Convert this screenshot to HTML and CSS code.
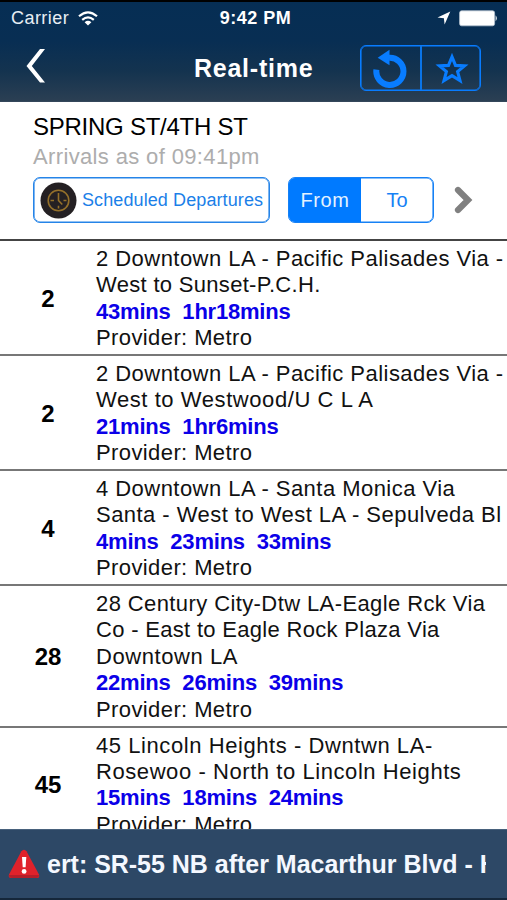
FILE: index.html
```
<!DOCTYPE html>
<html lang="en">
<head>
<meta charset="utf-8">
<title>Real-time</title>
<link rel="stylesheet" href="styles.css">
</head>
<body>
<header class="top">
  <div class="status">
    <div class="carrier"><span>Carrier</span>
      <svg width="20" height="15" viewBox="0 0 20 15" fill="none" stroke="#fff" stroke-width="2.2"><path d="M1 5.3Q10 -2.7 19 5.3M4.2 8.8Q10 3.8 15.8 8.8"/><path d="M6.6 11.2Q10 8.4 13.4 11.2L10 14.6Z" fill="#fff" stroke="none"/></svg>
    </div>
    <div class="clock">9:42 PM</div>
    <div class="indicators">
      <svg width="14" height="14" viewBox="0 0 14 14"><path d="M13.3 .5L7.6 13.5L6.9 7.2L.5 6.4Z" fill="#fff"/></svg>
      <svg width="39" height="17" viewBox="0 0 39 17"><rect x=".6" y=".8" width="35" height="15" rx="2" fill="#fff" stroke="#b6c3d1" stroke-width=".8"/><path d="M36.6 5.3Q39 8.3 36.6 11.3Z" fill="#fff"/></svg>
    </div>
  </div>
  <nav class="nav">
    <svg class="back" width="20" height="34" viewBox="0 0 20 34"><path d="M14 0H19L5.8 17L19 33.5H14L.5 17Z" fill="#fff"/></svg>
    <h1>Real-time</h1>
    <div class="tools">
      <span class="tool"><svg width="36" height="40" viewBox="0 0 36 40"><path d="M4.4 21.6A13.6 13.6 0 1 0 17 9.8" fill="none" stroke="#087cff" stroke-width="6"/><path d="M5.7 9.7L17.5 1.8V17.2Z" fill="#087cff"/></svg></span>
      <span class="tool"><svg width="36" height="34" viewBox="0 0 36 34"><path d="M19 5.8L22.5 14.4L31.5 14.9L24.6 20.6L27 29.6L19 24.6L11 29.6L13.4 20.6L6.5 14.9L15.5 14.4Z" fill="none" stroke="#087cff" stroke-width="3.1"/></svg></span>
    </div>
  </nav>
</header>
<section class="stop">
  <h2>SPRING ST/4TH ST</h2>
  <p class="asof">Arrivals as of 09:41pm</p>
  <div class="controls">
    <div class="scheduled">
      <svg width="37" height="37" viewBox="0 0 37 37"><circle cx="18.5" cy="18.5" r="18" fill="#242023"/><g fill="none" stroke="#94702a" stroke-width="1.6"><circle cx="18.5" cy="18.5" r="10.3"/><path d="M18.5 11V18.5L22.3 22.5M10.5 18.5H14M23.5 18.5H26.5M18.5 23.8V26.5"/></g></svg>
      <span>Scheduled Departures</span>
    </div>
    <div class="segments"><span class="seg on">From</span><span class="seg">To</span></div>
    <svg class="next" width="20" height="28" viewBox="0 0 20 28"><path d="M4 4L14 14L4 24" fill="none" stroke="#808080" stroke-width="6.2" stroke-linecap="round"/></svg>
  </div>
</section>
<main class="list">
  <article class="row"><div class="num">2</div><div class="info">
    <p>2 Downtown LA - Pacific Palisades Via -</p><p class="snug">West to Sunset-P.C.H.</p><p class="time">43mins&nbsp; 1hr18mins</p><p class="prov">Provider: Metro</p></div></article>
  <article class="row"><div class="num">2</div><div class="info">
    <p>2 Downtown LA - Pacific Palisades Via -</p><p class="loose">West to Westwood/U C L A</p><p class="time">21mins&nbsp; 1hr6mins</p><p class="prov">Provider: Metro</p></div></article>
  <article class="row"><div class="num">4</div><div class="info">
    <p>4 Downtown LA - Santa Monica Via</p><p>Santa - West to West LA - Sepulveda Bl</p><p class="time">4mins&nbsp; 23mins&nbsp; 33mins</p><p class="prov">Provider: Metro</p></div></article>
  <article class="row tall"><div class="num">28</div><div class="info">
    <p class="prov">28 Century City-Dtw LA-Eagle Rck Via</p><p class="snug">Co - East to Eagle Rock Plaza Via</p><p class="loose">Downtown LA</p><p class="time">22mins&nbsp; 26mins&nbsp; 39mins</p><p class="prov">Provider: Metro</p></div></article>
  <article class="row"><div class="num">45</div><div class="info">
    <p class="loose">45 Lincoln Heights - Dwntwn LA-</p><p class="loose">Rosewoo - North to Lincoln Heights</p><p class="time">15mins&nbsp; 18mins&nbsp; 24mins</p><p class="prov">Provider: Metro</p></div></article>
</main>
<footer class="alert">
  <svg width="32" height="30" viewBox="0 0 32 30"><path d="M13.4 2.2Q16 -.8 18.5 2.2L31 25.5Q32 29 28.5 29H3.5Q0 29 1 25.5Z" fill="#e0222b"/><path d="M1 26Q1 29 4 29H28Q31 29 31 26Z" fill="#b51e2a"/><path d="M14 8H18.3L17.6 18.2H14.7Z" fill="#fff"/><circle cx="16.1" cy="22.4" r="2.4" fill="#fff"/></svg>
  <div class="ticker">ert: SR-55 NB after Macarthur Blvd - H</div>
</footer>
</body>
</html>
```
FILE: styles.css
```
* { box-sizing: border-box; }
body {
  margin: 0;
  height: 900px;
  overflow: hidden;
  display: flex;
  flex-direction: column;
  background: #fff;
  color: #111;
  font-family: "Liberation Sans", Arial, sans-serif;
  font-size: 22px;
}
h1, h2, p { margin: 0; font-weight: normal; white-space: nowrap; }
svg { display: block; flex: none; }

.top {
  height: 102px;
  flex: none;
  border-top: 2px solid #000;
  border-bottom: 1px solid #34465a;
  background: linear-gradient(#062e54, #082e53 40%, #14334f 70%, #2b3f53);
  color: #fff;
}
.status {
  height: 32px;
  display: grid;
  grid-template-columns: 1fr auto 1fr;
  align-items: center;
  padding: 0 9px 0 11px;
  font-size: 18px;
}
.carrier { display: flex; align-items: center; gap: 9px; letter-spacing: 0.45px; color: #e8eef5; }
.clock { font-weight: bold; letter-spacing: 0.5px; margin-right: -2px; }
.indicators { display: flex; align-items: center; justify-content: flex-end; gap: 8px; }
.nav { height: 68px; display: flex; align-items: center; padding: 0 26px; }
.back { margin-top: -4px; }
h1 { width: 119px; margin-left: 148px; font-weight: bold; font-size: 25px; letter-spacing: 0.75px; }
.tools {
  width: 122px;
  height: 46px;
  margin-left: 47px;
  border: 1px solid #087cff;
  box-shadow: inset 0 0 0 0.6px #087cff;
  border-radius: 6px;
  display: flex;
}
.tool { flex: 1; display: flex; align-items: center; justify-content: center; }
.tool + .tool { border-left: 2px solid #0a74e8; }

.stop { height: 139px; flex: none; padding: 9px 32px 0 33px; border-bottom: 2px solid #444; }
h2 { font-size: 24px; line-height: 32px; color: #000; letter-spacing: -0.25px; }
.asof { line-height: 28px; font-size: 22px; color: #adadad; letter-spacing: 0.36px; }
.controls { display: flex; align-items: center; margin-top: 6px; }
.scheduled {
  width: 237px;
  height: 46px;
  border: 1px solid #2584e8;
  box-shadow: inset 0 0 0 0.6px #2584e8;
  border-radius: 7px;
  display: flex;
  align-items: center;
  gap: 5px;
  padding-left: 6px;
  color: #1b7fe8;
  font-size: 18px;
  letter-spacing: 0.1px;
  white-space: nowrap;
}
.segments {
  width: 146px;
  height: 46px;
  margin-left: 18px;
  border: 1px solid #1681f5;
  box-shadow: inset 0 0 0 0.6px #1681f5;
  border-radius: 7px;
  display: flex;
  overflow: hidden;
  color: #1681f5;
  font-size: 20px;
}
.seg { flex: 1; display: flex; align-items: center; justify-content: center; }
.on { background: #007aff; color: #e4f3ff; letter-spacing: 0.6px; }
.next { margin-left: 20px; }

.list { flex: 1; min-height: 0; overflow: hidden; }
.row { height: 115.1px; display: flex; align-items: center; border-bottom: 2px solid #777; }
.tall { height: 141.5px; }
.num { width: 96px; padding-top: 2px; text-align: center; font-size: 24px; font-weight: bold; color: #000; }
.info { line-height: 26.4px; padding-top: 2px; letter-spacing: 0.46px; }
.snug { letter-spacing: 0.31px; }
.loose { letter-spacing: 0.57px; }
.prov { letter-spacing: 0.4px; }
.time { color: #0b00e8; font-weight: bold; letter-spacing: -0.21px; }

.alert {
  height: 71px;
  flex: none;
  display: flex;
  align-items: center;
  gap: 7px;
  padding: 0 20px 0 8px;
  background: #2d4866;
  border-top: 1px solid #47617c;
  border-bottom: 2px solid #15273a;
  color: #f4f8ff;
}
.ticker { width: 439px; padding-top: 1px; overflow: hidden; white-space: nowrap; font-size: 25px; font-weight: bold; letter-spacing: -0.02px; }
```
